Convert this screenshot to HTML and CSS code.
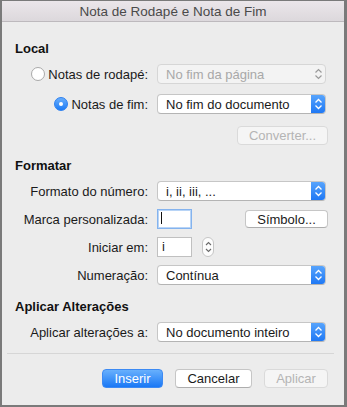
FILE: index.html
```html
<!DOCTYPE html>
<html lang="pt">
<head>
    <meta charset="UTF-8">
    <meta name="viewport" content="width=device-width, initial-scale=1.0">
    <title>Nota de Rodapé e Nota de Fim</title>
    <link rel="stylesheet" href="styles.css">
</head>
<body>
    <div class="window">
        <div class="titlebar">Nota de Rodapé e Nota de Fim</div>

        <div class="content">
            <!-- Local -->
            <h3 class="section local">Local</h3>
            <div class="row first">
                <label class="row-label">
                    <span class="radio"></span>Notas de rodapé:
                </label>
                <div class="popup disabled">
                    <span>No fim da página</span>
                    <span class="arrows">
                        <svg width="9" height="12" viewBox="0 0 9 12"><path d="M1.5 4.5 L4.5 1.5 L7.5 4.5 M1.5 7.5 L4.5 10.5 L7.5 7.5" fill="none" stroke="#9a9a9a" stroke-width="1.2"/></svg>
                    </span>
                </div>
            </div>
            <div class="row loose">
                <label class="row-label">
                    <span class="radio checked"></span>Notas de fim:
                </label>
                <div class="popup">
                    <span>No fim do documento</span>
                    <span class="arrows blue">
                        <svg width="9" height="12" viewBox="0 0 9 12"><path d="M1.5 4.5 L4.5 1.5 L7.5 4.5 M1.5 7.5 L4.5 10.5 L7.5 7.5" fill="none" stroke="#fff" stroke-width="1.3"/></svg>
                    </span>
                </div>
            </div>
            <div class="row right">
                <button class="btn disabled convert">Converter...</button>
            </div>

            <!-- Formatar -->
            <h3 class="section format">Formatar</h3>
            <div class="row first">
                <label class="row-label">Formato do número:</label>
                <div class="popup">
                    <span>i, ii, iii, ...</span>
                    <span class="arrows blue">
                        <svg width="9" height="12" viewBox="0 0 9 12"><path d="M1.5 4.5 L4.5 1.5 L7.5 4.5 M1.5 7.5 L4.5 10.5 L7.5 7.5" fill="none" stroke="#fff" stroke-width="1.3"/></svg>
                    </span>
                </div>
            </div>
            <div class="row">
                <label class="row-label">Marca personalizada:</label>
                <div class="field focus"><span class="caret"></span></div>
                <button class="btn symbol">Símbolo...</button>
            </div>
            <div class="row">
                <label class="row-label">Iniciar em:</label>
                <div class="field">i</div>
                <div class="stepper">
                    <svg width="7" height="14" viewBox="0 0 7 14"><path d="M1 5 L3.5 2.5 L6 5 M1 9 L3.5 11.5 L6 9" fill="none" stroke="#6a6a6a" stroke-width="1.1"/></svg>
                </div>
            </div>
            <div class="row">
                <label class="row-label">Numeração:</label>
                <div class="popup">
                    <span>Contínua</span>
                    <span class="arrows blue">
                        <svg width="9" height="12" viewBox="0 0 9 12"><path d="M1.5 4.5 L4.5 1.5 L7.5 4.5 M1.5 7.5 L4.5 10.5 L7.5 7.5" fill="none" stroke="#fff" stroke-width="1.3"/></svg>
                    </span>
                </div>
            </div>

            <!-- Aplicar Alterações -->
            <h3 class="section apply">Aplicar Alterações</h3>
            <div class="row first">
                <label class="row-label">Aplicar alterações a:</label>
                <div class="popup">
                    <span>No documento inteiro</span>
                    <span class="arrows blue">
                        <svg width="9" height="12" viewBox="0 0 9 12"><path d="M1.5 4.5 L4.5 1.5 L7.5 4.5 M1.5 7.5 L4.5 10.5 L7.5 7.5" fill="none" stroke="#fff" stroke-width="1.3"/></svg>
                    </span>
                </div>
            </div>
        </div>

        <div class="separator"></div>

        <div class="buttons">
            <button class="btn primary">Inserir</button>
            <button class="btn">Cancelar</button>
            <button class="btn disabled">Aplicar</button>
        </div>
    </div>
</body>
</html>
```

FILE: styles.css
```css
* {
    margin: 0;
    padding: 0;
    box-sizing: border-box;
}

body {
    font-family: 'Liberation Sans', Arial, sans-serif;
    font-size: 13px;
    color: #1a1a1a;
    background: #ececec;
}

.window {
    width: 347px;
    height: 407px;
    background: #ececec;
    border-top: 1px solid #7a7a7a;
    border-left: 2px solid #7a7a7a;
    border-right: 3px solid #7a7a7a;
    border-bottom: 2px solid #7a7a7a;
}

.titlebar {
    height: 21px;
    line-height: 22px;
    text-align: center;
    font-size: 13.5px;
    color: #4a4a4a;
    background: linear-gradient(#ebe6ea, #dcd8dc);
    border-bottom: 1px solid #bdb9bd;
}

.content {
    padding-right: 16px;
}

/* section headings, margins measured from the row above */
.section {
    font-size: 13px;
    font-weight: bold;
    color: #111;
    padding-left: 13px;
    line-height: 16px;
}

.section.local {
    margin-top: 19px;
}

.section.format {
    margin-top: 13px;
}

.section.apply {
    margin-top: 14px;
}

.row {
    display: flex;
    align-items: center;
    height: 20px;
    margin-top: 8px;
}

.row.first {
    margin-top: 7px;
}

.row.loose {
    margin-top: 10px;
}

.row.right {
    justify-content: flex-end;
    margin-top: 11px;
}

.row-label {
    width: 146px;
    flex: none;
    display: flex;
    align-items: center;
    justify-content: flex-end;
    margin-right: 9px;
    white-space: nowrap;
}

.radio {
    width: 14px;
    height: 14px;
    border-radius: 50%;
    background: #fff;
    border: 1px solid #a9a9a9;
    margin-right: 3px;
    position: relative;
}

.radio.checked {
    border: 1px solid #2b7ff0;
    background: linear-gradient(#69aefc, #1c7bf6);
}

.radio.checked::after {
    content: '';
    position: absolute;
    left: 4px;
    top: 4px;
    width: 4px;
    height: 4px;
    border-radius: 50%;
    background: #fff;
}

.popup {
    width: 169px;
    height: 20px;
    display: flex;
    align-items: center;
    justify-content: space-between;
    background: #fff;
    border: 1px solid #c6c6c6;
    border-bottom-color: #b4b4b4;
    border-radius: 4px;
    padding-left: 8px;
    overflow: hidden;
}

.popup.disabled {
    background: #f3f3f3;
    color: #a8a8a8;
    border-color: #d6d6d6;
}

.arrows {
    width: 15px;
    height: 20px;
    margin-right: -1px;
    display: flex;
    align-items: center;
    justify-content: center;
}

.arrows.blue {
    background: linear-gradient(#5aa6fd, #1c76f4);
    border-radius: 0 4px 4px 0;
}

.field {
    width: 35px;
    height: 20px;
    background: #fff;
    border: 1px solid #c0c0c0;
    padding-left: 4px;
    line-height: 18px;
}

.field.focus {
    border: 1px solid #84b3ee;
    box-shadow: 0 0 0 1px #b8d4f6 inset;
}

.caret {
    display: block;
    width: 1px;
    height: 12px;
    margin-top: 2px;
    margin-left: -1px;
    background: #111;
}

.stepper {
    width: 12px;
    height: 20px;
    margin-left: 10px;
    background: #fdfdfd;
    border: 1px solid #c6c6c6;
    border-radius: 6px;
    display: flex;
    align-items: center;
    justify-content: center;
}

.btn {
    font-family: inherit;
    font-size: 13px;
    height: 19px;
    padding: 0;
    background: #fff;
    color: #1a1a1a;
    border: 1px solid #c6c6c6;
    border-bottom-color: #adadad;
    border-radius: 4px;
}

.btn.disabled {
    background: #f5f5f5;
    color: #b4b4b4;
    border-color: #dadada;
}

.btn.primary {
    background: linear-gradient(#68b0fd, #1a78f5);
    border-color: #3d8af3;
    color: #fff;
}

.btn.convert {
    width: 91px;
}

.btn.symbol {
    width: 83px;
    height: 18px;
    margin-left: auto;
}

.separator {
    height: 1px;
    background: #d6d6d6;
    margin: 11px 10px 0 5px;
}

.buttons {
    display: flex;
    justify-content: flex-end;
    gap: 12px;
    padding-right: 16px;
    margin-top: 15px;
}

.buttons .primary {
    width: 61px;
}

.buttons .btn:nth-child(2) {
    width: 77px;
}

.buttons .disabled {
    width: 64px;
}
```
